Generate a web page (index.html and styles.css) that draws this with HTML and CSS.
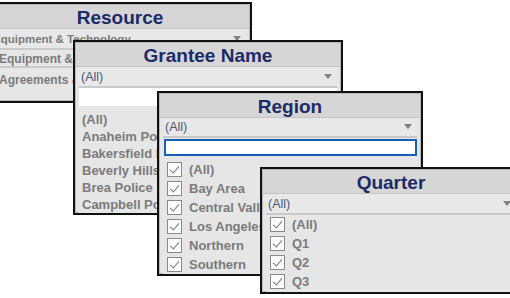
FILE: index.html
```html
<!DOCTYPE html>
<html>
<head>
<meta charset="utf-8">
<link rel="stylesheet" href="styles.css">
</head>
<body>
<div class="desk">
  <div class="win w-resource">
    <div class="title">Resource</div>
    <div class="drop"><span class="dtext">Equipment &amp; Technology</span><span class="arrow"></span></div>
    <div class="row">Equipment &amp; Technology</div>
    <div class="row last">Agreements &amp; Contracts</div>
  </div>

  <div class="win w-grantee">
    <div class="title">Grantee Name</div>
    <div class="drop"><span>(All)</span><span class="arrow"></span></div>
    <div class="search plain"></div>
    <ul class="list plainlist">
      <li>(All)</li>
      <li>Anaheim Police Department</li>
      <li>Bakersfield Police Department</li>
      <li>Beverly Hills Police Department</li>
      <li>Brea Police Department</li>
      <li>Campbell Police Department</li>
    </ul>
  </div>

  <div class="win w-region">
    <div class="title">Region</div>
    <div class="drop"><span>(All)</span><span class="arrow"></span></div>
    <div class="search focus"></div>
    <ul class="list checks">
      <li><span class="cb"></span>(All)</li>
      <li><span class="cb"></span>Bay Area</li>
      <li><span class="cb"></span>Central Valley</li>
      <li><span class="cb"></span>Los Angeles</li>
      <li><span class="cb"></span>Northern</li>
      <li><span class="cb"></span>Southern</li>
    </ul>
  </div>

  <div class="win w-quarter">
    <div class="title">Quarter</div>
    <div class="drop"><span>(All)</span><span class="arrow"></span></div>
    <ul class="list checks">
      <li><span class="cb"></span>(All)</li>
      <li><span class="cb"></span>Q1</li>
      <li><span class="cb"></span>Q2</li>
      <li><span class="cb"></span>Q3</li>
    </ul>
  </div>
</div>
</body>
</html>
```

FILE: styles.css
```css
html, body {
  margin: 0;
  padding: 0;
  background: #ffffff;
}
.desk {
  position: relative;
  width: 510px;
  height: 298px;
  overflow: hidden;
  font-family: "Liberation Sans", Arial, sans-serif;
}
.win {
  position: absolute;
  box-sizing: border-box;
  border: 2px solid #111;
  background: #e6e6e6;
  box-shadow: inset 0 0 0 1px #b8b8b8;
  display: flex;
  flex-direction: column;
  overflow: hidden;
}
.w-resource { left: -12px; top: 2px; width: 264px; height: 101px; }
.w-grantee { left: 73px; top: 40px; width: 270px; height: 175px; }
.w-region { left: 157px; top: 91px; width: 266px; height: 185px; }
.w-quarter { left: 260px; top: 167px; width: 262px; height: 127px; }

.title {
  background: #d6d6d6;
  color: #1c2a68;
  font-weight: bold;
  font-size: 19px;
  text-align: center;
  height: 23px;
  line-height: 25px;
  margin: 1px 1px 0 1px;
  border-bottom: 1px solid #c4c4c4;
  white-space: nowrap;
}
.drop {
  display: flex;
  justify-content: space-between;
  align-items: center;
  height: 19px;
  margin: 0 4px 0 4px;
  padding: 0 5px 0 2px;
  background: #e8e8e8;
  border-bottom: 2px solid #c9c9c9;
  color: #4a5778;
  font-size: 12.5px;
}
.arrow {
  width: 0;
  height: 0;
  border-left: 4px solid transparent;
  border-right: 4px solid transparent;
  border-top: 5px solid #808080;
}
.search {
  height: 18px;
  margin: 0 4px;
  background: #fff;
  box-sizing: border-box;
}
.search.focus {
  border: 2px solid #1760b8;
  margin: 1px 4px 1px 5px;
}
.list {
  list-style: none;
  margin: 0 4px;
  padding: 0;
  flex: 1;
  background: #e6e6e6;
  color: #7b7b7b;
  font-weight: bold;
  font-size: 13px;
  white-space: nowrap;
}
.plainlist {
  padding-top: 5px;
  padding-left: 3px;
}
.plainlist li {
  height: 17px;
  line-height: 17px;
  width: 75px;
  overflow: hidden;
}
.checks {
  padding-top: 3px;
  padding-left: 4px;
}
.w-quarter .checks {
  padding-top: 0;
}
.checks li {
  display: flex;
  align-items: center;
  gap: 7px;
  height: 19px;
}
.w-region .checks li {
  width: 93px;
  overflow: hidden;
}
.cb {
  width: 13px;
  height: 13px;
  border: 1px solid #8a8a8a;
  background: #fbfbfb;
  position: relative;
  flex: none;
}
.cb::after {
  content: "";
  position: absolute;
  left: 4px;
  top: 1px;
  width: 4px;
  height: 8px;
  border-right: 1.5px solid #777;
  border-bottom: 1.5px solid #777;
  transform: rotate(40deg);
}
.row {
  width: 79px;
  overflow: hidden;
  height: 17px;
  line-height: 17px;
  margin: 1px 4px 0 4px;
  padding-left: 5px;
  box-sizing: border-box;
  color: #7b7b7b;
  font-weight: bold;
  font-size: 12px;
  white-space: nowrap;
  border-bottom: 2px solid #cacaca;
}
.w-resource .drop {
  font-weight: bold;
  font-size: 11.5px;
  color: #7b7b7b;
  padding-left: 0;
  border-bottom: 2px solid #cacaca;
}
.w-resource .dtext {
  margin-left: -1px;
}
.w-resource .row.last {
  margin-top: 4px;
  border-bottom: none;
}
```
